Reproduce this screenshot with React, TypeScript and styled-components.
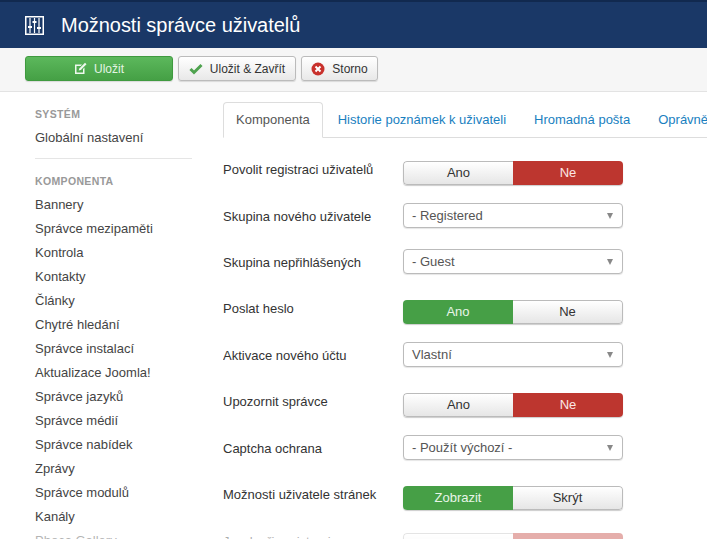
import React from "react";
import styled, { createGlobalStyle } from "styled-components";

const Global = createGlobalStyle`
  html, body { margin: 0; padding: 0; background: #fff; overflow: hidden; height: 539px; }
  body { font-family: "Liberation Sans", Arial, sans-serif; font-size: 13px; color: #333; }
`;
const Page = styled.div`
  position: relative; width: 707px; height: 539px; overflow: hidden;
`;
const Header = styled.header`
  box-sizing: border-box; height: 48px; background: #1a3867; border-top: 2px solid #11294f;
  display: flex; align-items: center; padding: 0 0 0 25px; gap: 17px; color: #fff;
`;
const Title = styled.h1`
  margin: 0; font-size: 20px; font-weight: 400; line-height: 24px; letter-spacing: -0.03px;
`;
const Toolbar = styled.div`
  box-sizing: border-box; height: 44px; background: #f6f6f6; border-bottom: 1px solid #e3e3e3;
  padding: 8px 0 0 25px; display: flex; gap: 5px; align-items: flex-start;
`;
const ToolButton = styled.button<{ $w: number; $primary?: boolean }>`
  box-sizing: border-box; width: ${(p) => p.$w}px; height: 25px; padding: 0; border-radius: 3px;
  display: flex; align-items: center; justify-content: center; gap: 7px;
  font: 12px "Liberation Sans", Arial, sans-serif;
  color: ${(p) => (p.$primary ? "#e4f4e4" : "#333")};
  border: 1px solid ${(p) => (p.$primary ? "#3f9a3f" : "#bbb")};
  background: ${(p) => (p.$primary ? "linear-gradient(#5cb85c,#45a045)" : "linear-gradient(#fff,#e8e8e8)")};
  box-shadow: 0 1px 1px rgba(0,0,0,.12);
`;
const Body = styled.div`
  display: flex; align-items: flex-start;
`;
const Sidebar = styled.nav`
  box-sizing: border-box; width: 223px; flex: none; padding: 14px 31px 0 35px;
`;
const SideHead = styled.div`
  font-size: 10.5px; font-weight: 700; color: #999; line-height: 16px; letter-spacing: .35px;
  height: 16px; margin-bottom: 4px;
`;
const SideItem = styled.div`
  font-size: 13px; color: #444; line-height: 24px; height: 24px; white-space: nowrap;
`;
const SideRule = styled.hr`
  border: 0; border-top: 1px solid #e5e5e5; margin: 8px 0 14px; height: 0;
`;
const Main = styled.main`
  flex: 1; min-width: 0; padding-top: 10px; overflow: hidden;
`;
const Tabs = styled.div`
  display: flex; gap: 2px; height: 36px; box-sizing: border-box; border-bottom: 1px solid #ddd; white-space: nowrap;
`;
const Tab = styled.div<{ $active?: boolean }>`
  box-sizing: border-box; height: 36px; padding: 0 12px; border: 1px solid transparent;
  line-height: 34px; font-size: 13px; flex: none; border-radius: 4px 4px 0 0;
  color: ${(p) => (p.$active ? "#555" : "#1a7fbf")};
  ${(p) => p.$active && "border-color: #ddd; border-bottom-color: #fff; background: #fff;"}
`;
const Form = styled.div`
  padding-top: 23px;
`;
const Row = styled.div<{ $h: number }>`
  display: flex; height: ${(p) => p.$h}px; align-items: flex-start;
`;
const Label = styled.div<{ $select?: boolean }>`
  width: 180px; flex: none; font-size: 13px; color: #333; line-height: 16px;
  padding-top: ${(p) => (p.$select ? 6 : 1)}px;
`;
const Toggle = styled.div`
  box-sizing: border-box; width: 220px; height: 24px; display: flex;
  border-radius: 4px; overflow: hidden; box-shadow: 0 1px 1px rgba(0,0,0,.2);
`;
const ToggleOption = styled.div<{ $on?: "green" | "red"; $side: "l" | "r" }>`
  flex: none; width: 110px; box-sizing: border-box; padding-bottom: 1px;
  display: flex; align-items: center; justify-content: center; font-size: 13px; line-height: 1;
  ${(p) =>
    p.$on === "green"
      ? "background:#469f46;color:#e8f5e8;"
      : p.$on === "red"
      ? "background:#bd362f;color:#fbe6e5;"
      : `background:linear-gradient(#fff,#e6e6e6);color:#333;border:1px solid #bbb;${p.$side === "l" ? "border-right:0;border-radius:4px 0 0 4px;" : "border-left:0;border-radius:0 4px 4px 0;"}`}
`;
const Select = styled.div`
  box-sizing: border-box; width: 220px; height: 25px; border: 1px solid #bbb; border-radius: 4px;
  background: #fff; padding: 0 8px; display: flex; align-items: center; justify-content: space-between;
  font-size: 13px; color: #555; box-shadow: 0 1px 1px rgba(0,0,0,.1);
`;
const Caret = styled.span`
  width: 0; height: 0; border-left: 3.5px solid transparent; border-right: 3.5px solid transparent;
  border-top: 6px solid #888; margin-top: 1px; margin-right: 1px;
`;
const Fade = styled.div`
  position: absolute; left: 0; right: 0; bottom: 0; height: 14px; background: rgba(255,255,255,.6);
`;

const EqualizerIcon = () => (
  <svg width="19" height="19" viewBox="0 0 19 19" fill="none" stroke="#fff">
    <rect x="0.75" y="0.75" width="17.5" height="17.5" strokeWidth="1.5" />
    <path d="M5 2v15M9.5 2v15M14 2v15" strokeWidth="1.2" />
    <path d="M3 11h4M7.5 6h4M12 12h4" strokeWidth="2" />
  </svg>
);
const EditIcon = () => (
  <svg width="13" height="13" viewBox="0 0 13 13">
    <path d="M1 2.5h7L6.6 4H2.5v6.5H9V7l1.5-1.5V12H1z" fill="#eef8ee" />
    <path d="M11 .8 12.5 2.3 6.8 8 4.7 8.6 5.3 6.4z" fill="#eef8ee" />
  </svg>
);
const CheckIcon = () => (
  <svg width="14" height="12" viewBox="0 0 14 12">
    <path d="M1.5 6 5 9.5 12.5 2" fill="none" stroke="#4ea24e" strokeWidth="3" />
  </svg>
);
const CancelIcon = () => (
  <svg width="14" height="14" viewBox="0 0 14 14">
    <circle cx="7" cy="7" r="6.5" fill="#c8312c" />
    <path d="M4.5 4.5l5 5M9.5 4.5l-5 5" stroke="#fff" strokeWidth="2" />
  </svg>
);

const components = [
  "Bannery", "Správce mezipaměti", "Kontrola", "Kontakty", "Články", "Chytré hledání",
  "Správce instalací", "Aktualizace Joomla!", "Správce jazyků", "Správce médií",
  "Správce nabídek", "Zprávy", "Správce modulů", "Kanály", "Phoca Gallery",
];

type Field =
  | { kind: "toggle"; label: string; h: number; a: string; b: string; on: "a" | "b" }
  | { kind: "select"; label: string; h: number; value: string };

const fields: Field[] = [
  { kind: "toggle", label: "Povolit registraci uživatelů", h: 42, a: "Ano", b: "Ne", on: "b" },
  { kind: "select", label: "Skupina nového uživatele", h: 46, value: "- Registered" },
  { kind: "select", label: "Skupina nepřihlášených", h: 51, value: "- Guest" },
  { kind: "toggle", label: "Poslat heslo", h: 42, a: "Ano", b: "Ne", on: "a" },
  { kind: "select", label: "Aktivace nového účtu", h: 51, value: "Vlastní" },
  { kind: "toggle", label: "Upozornit správce", h: 42, a: "Ano", b: "Ne", on: "b" },
  { kind: "select", label: "Captcha ochrana", h: 51, value: "- Použít výchozí -" },
  { kind: "toggle", label: "Možnosti uživatele stránek", h: 47, a: "Zobrazit", b: "Skrýt", on: "a" },
  { kind: "toggle", label: "Jazyk při registraci", h: 30, a: "Ano", b: "Ne", on: "b" },
];

export default function App() {
  return (
    <Page>
      <Global />
      <Header>
        <EqualizerIcon />
        <Title>Možnosti správce uživatelů</Title>
      </Header>
      <Toolbar>
        <ToolButton $w={148} $primary><EditIcon />Uložit</ToolButton>
        <ToolButton $w={118}><CheckIcon />Uložit &amp; Zavřít</ToolButton>
        <ToolButton $w={77}><CancelIcon />Storno</ToolButton>
      </Toolbar>
      <Body>
        <Sidebar>
          <SideHead>SYSTÉM</SideHead>
          <SideItem>Globální nastavení</SideItem>
          <SideRule />
          <SideHead>KOMPONENTA</SideHead>
          {components.map((c) => <SideItem key={c}>{c}</SideItem>)}
        </Sidebar>
        <Main>
          <Tabs>
            <Tab $active>Komponenta</Tab>
            <Tab>Historie poznámek k uživateli</Tab>
            <Tab>Hromadná pošta</Tab>
            <Tab>Oprávnění</Tab>
          </Tabs>
          <Form>
            {fields.map((f) => (
              <Row key={f.label} $h={f.h}>
                <Label $select={f.kind === "select"}>{f.label}</Label>
                {f.kind === "toggle" ? (
                  <Toggle>
                    <ToggleOption $side="l" $on={f.on === "a" ? "green" : undefined}>{f.a}</ToggleOption>
                    <ToggleOption $side="r" $on={f.on === "b" ? "red" : undefined}>{f.b}</ToggleOption>
                  </Toggle>
                ) : (
                  <Select>{f.value}<Caret /></Select>
                )}
              </Row>
            ))}
          </Form>
        </Main>
      </Body>
      <Fade />
    </Page>
  );
}
